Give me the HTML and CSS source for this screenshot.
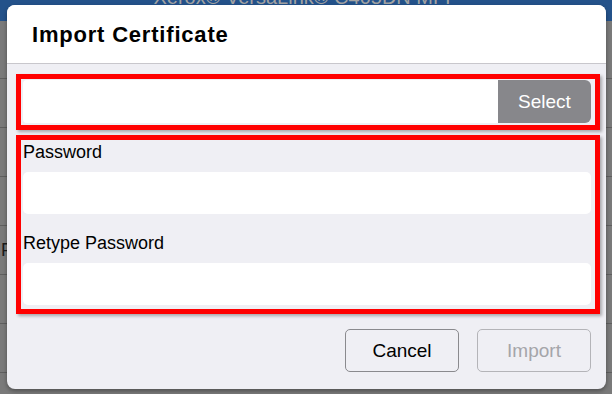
FILE: index.html
```html
<!DOCTYPE html>
<html lang="en">
<head>
    <meta charset="UTF-8">
    <meta name="viewport" content="width=device-width, initial-scale=1.0">
    <title>Import Certificate</title>
    <link rel="stylesheet" href="styles.css">
</head>
<body>
    <!-- Página por trás do diálogo (escurecida) -->
    <div class="page">
        <header class="page-bar">
            <span class="page-title">Xerox® VersaLink® C405DN MFP</span>
        </header>
        <div class="page-sub"></div>
        <ul class="page-rows">
            <li></li>
            <li></li>
            <li></li>
            <li>F</li>
            <li></li>
            <li></li>
            <li></li>
        </ul>
    </div>

    <!-- Diálogo -->
    <div class="dialog">
        <div class="dialog-header">
            <h1>Import Certificate</h1>
        </div>
        <div class="dialog-body">
            <div class="mark file-box">
                <div class="file-field">
                    <div class="file-input"></div>
                    <button class="select-btn">Select</button>
                </div>
            </div>

            <div class="mark pass-box">
                <div class="form-group">
                    <label>Password</label>
                    <div class="text-input"></div>
                </div>
                <div class="form-group">
                    <label>Retype Password</label>
                    <div class="text-input"></div>
                </div>
            </div>

            <div class="dialog-actions">
                <button class="btn">Cancel</button>
                <button class="btn disabled">Import</button>
            </div>
        </div>
    </div>
</body>
</html>
```

FILE: styles.css
```css
* {
    margin: 0;
    padding: 0;
    box-sizing: border-box;
}

body {
    font-family: 'Liberation Sans', Arial, sans-serif;
    background-color: #777777;
    width: 612px;
    height: 394px;
    overflow: hidden;
    position: relative;
}

/* página de fundo */
.page {
    height: 394px;
    overflow: hidden;
}

.page-bar {
    height: 21px;
    background-color: #24528a;
    overflow: hidden;
}

.page-title {
    display: block;
    margin-top: -13px;
    font-size: 20px;
    line-height: 20px;
    color: #a3a3a3;
    text-align: center;
}

.page-sub {
    height: 57px;
    background-color: #7a7a7a;
}

.page-rows {
    list-style: none;
}

.page-rows li {
    height: 49px;
    border-top: 1px solid #5f5f5f;
    background-color: #7a7a7a;
    padding-left: 1px;
    font-size: 18px;
    line-height: 48px;
    color: #1a1a1a;
}

/* diálogo */
.dialog {
    position: absolute;
    left: 7px;
    top: 5px;
    width: 599px;
    height: 384px;
    background-color: #efeff4;
    border-radius: 8px;
    overflow: hidden;
    box-shadow: 0 2px 4px rgba(0, 0, 0, 0.35);
    display: flex;
    flex-direction: column;
}

.dialog-header {
    height: 59px;
    background-color: #ffffff;
    border-bottom: 1px solid #c8c7cc;
    padding-left: 25px;
    display: flex;
    align-items: center;
}

.dialog-header h1 {
    font-size: 22px;
    font-weight: bold;
    letter-spacing: 0.8px;
    color: #000000;
    padding-top: 2px;
}

.dialog-body {
    flex: 1;
    padding: 10px 6px 0 9px;
    display: flex;
    flex-direction: column;
}

.mark {
    border: 5px solid #ff0000;
    box-shadow: 2px 2px 3px rgba(0, 0, 0, 0.3);
}

.file-box {
    padding: 1px 4px 2px 2px;
}

.file-field {
    display: flex;
    height: 43px;
}

.file-input {
    flex: 1;
    background-color: #ffffff;
    border-radius: 4px 0 0 4px;
}

.select-btn {
    width: 93px;
    border: none;
    background-color: #87878b;
    color: #ffffff;
    font-family: inherit;
    font-size: 19px;
    border-radius: 0 6px 6px 0;
}

.pass-box {
    margin-top: 5px;
    padding: 1px 4px 4px 2px;
}

.form-group + .form-group {
    margin-top: 18px;
}

label {
    display: block;
    font-size: 18px;
    line-height: 22px;
    color: #000000;
    margin-bottom: 9px;
}

.text-input {
    height: 42px;
    background-color: #ffffff;
    border-radius: 5px;
}

.dialog-actions {
    display: flex;
    justify-content: flex-end;
    gap: 18px;
    margin-top: 15px;
    padding-right: 9px;
}

.btn {
    width: 114px;
    height: 43px;
    border: 1px solid #8a8a8e;
    border-radius: 5px;
    background-color: transparent;
    font-family: inherit;
    font-size: 19px;
    color: #000000;
}

.btn.disabled {
    border-color: #b4b4b8;
    color: #a5a5a9;
}
```
